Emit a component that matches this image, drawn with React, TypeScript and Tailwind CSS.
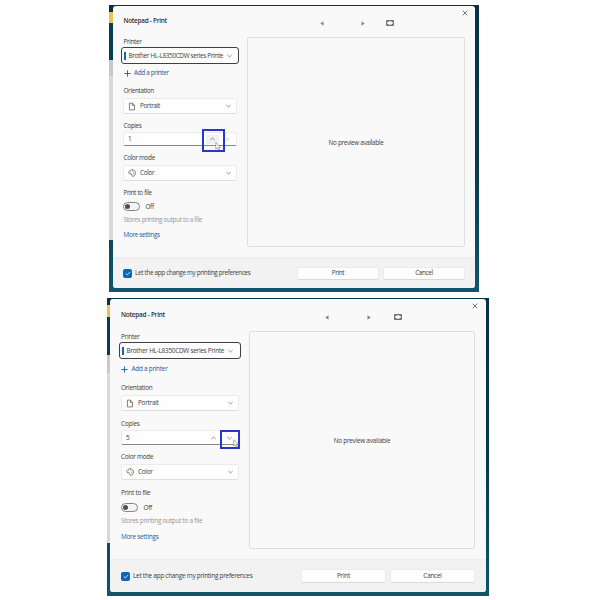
import React from 'react';

const first = {
  shell: 'ml-[109px] mt-[5px] h-[287px] w-[370px] pl-1 pr-1 pt-px',
  win: 'h-[282px]',
  body: 'h-[251px] pl-[10px] pr-[10px]',
  col: 'w-[114px]',
  title: 'h-[29px] text-[6.3px] tracking-[-0.22px] pt-px pl-[0.5px]',
  label: 'h-[12px] pt-[1.5px] pl-[0.5px]',
  printer: 'w-[118px] -ml-[2px] pl-[3px] pr-[6px]',
  add: 'h-[17px] pt-[1.5px] pl-[0.5px]',
  orient: 'h-[17px] pt-[3.5px] pl-[0.5px]',
  select: 'h-[16px]',
  copies: 'h-[18px] pt-[6.5px] pl-[0.5px]',
  input: 'h-[14px]',
  color: 'h-[19px] pt-[4.5px] pl-[0.5px]',
  file: 'h-[20px] pt-[3.5px] pl-[0.5px]',
  stores: 'h-[16px] pt-[1.5px] pl-[0.5px]',
  more: 'h-[14px] pt-[1.5px] pl-[0.5px]',
  text: 'text-[6.35px] tracking-[-0.32px]',
  right: 'ml-[10px] w-[218px]',
  bar: 'h-[31px]',
  close: 'right-[-3px] top-[3.5px]',
  prev: 'left-[73px] top-[15px]',
  next: 'left-[114px] top-[15px]',
  fit: 'left-[139px] top-[14px]',
  preview: 'h-[210px]',
  footer: 'pl-[10px] pr-[10px]',
  print: 'w-[82px] h-[13px]',
  up: 'mr-[3px]',
  mark: '-top-[4px] left-[78px] h-[23px] w-[23px]',
  cursor: 'left-[91px] top-[9px]',
  yellow: 'h-[11px]',
  navy: 'h-[37px]',
  gray: 'h-[15px]',
  light: 'h-[165px]',
};

const second: typeof first = {
  shell: 'ml-[107px] mt-[6px] h-[298px] w-[382px] pl-[3px] pr-[3px] pt-px',
  win: 'h-[293px]',
  body: 'h-[260px] pl-[11px] pr-[11px]',
  col: 'w-[118px]',
  title: 'h-[31px] text-[6.45px] tracking-[-0.25px] pt-px',
  label: 'h-[12px] pt-[1.5px]',
  printer: 'w-[122px] -ml-[2px] pl-[3px] pr-[7px]',
  add: 'h-[19px] pt-[1.5px]',
  orient: 'h-[17px] pt-[2.5px]',
  select: 'h-[16px]',
  copies: 'h-[19px] pt-[7px]',
  input: 'h-[15px]',
  color: 'h-[19px] pt-[5.5px]',
  file: 'h-[22px] pt-[4.5px]',
  stores: 'h-[17px] pt-[1.5px]',
  more: 'h-[14px] pt-[2px]',
  text: 'text-[6.4px] tracking-[-0.25px]',
  right: 'ml-[10px] w-[226px]',
  bar: 'h-[32px]',
  close: 'right-[-3px] top-[4px]',
  prev: 'left-[76px] top-[16px]',
  next: 'left-[118px] top-[16px]',
  fit: 'left-[144.5px] top-[15px]',
  preview: 'h-[218px]',
  footer: 'pl-[11px] pr-[11px]',
  print: 'w-[85px] h-[14px]',
  up: 'mr-[5px]',
  mark: '-top-px left-[98px] h-[19px] w-[20px]',
  cursor: 'left-[111px] top-[8px]',
  yellow: 'h-[12px]',
  navy: 'h-[38px]',
  gray: 'h-[17px]',
  light: 'h-[171px]',
};

function Chevron({ up = false, faint = false }: { up?: boolean; faint?: boolean }) {
  return (
    <svg width="5" height="4" viewBox="0 0 5 4" fill="none" stroke={faint ? '#b5b5b5' : '#777'} strokeWidth="0.8" className="shrink-0">
      <path d={up ? 'M0.4 3L2.5 1L4.6 3' : 'M0.4 1L2.5 3L4.6 1'} />
    </svg>
  );
}

function Select({ icon, value, size }: { icon: React.ReactNode; value: string; size: string }) {
  return (
    <div className={`flex w-full items-center rounded-[2px] border border-[#ebebeb] border-b-[#dedede] bg-[#fefefe] pl-[4px] pr-[5px] ${size}`}>
      {icon}
      <span className="ml-[4px] flex-1">{value}</span>
      <Chevron />
    </div>
  );
}

const PageIcon = () => (
  <svg width="8" height="9" viewBox="0 0 8 9" fill="none" stroke="#555" strokeWidth="0.75">
    <path d="M1.4 1.1H4.3L6.5 3.3V7.9H1.4ZM4.3 1.1V3.3H6.5" />
  </svg>
);

const PaletteIcon = () => (
  <svg width="8" height="8" viewBox="0 0 8 8" fill="none" stroke="#555" strokeWidth="0.75">
    <path d="M0.7 3.8C1 1.5 3 0.4 5 0.8C7.2 1.3 7.8 3.4 7.2 5.2C6.7 6.8 5.3 7.7 4.2 7.2C3.3 6.8 4.2 5.3 3.2 4.8C2.4 4.4 0.9 5.2 0.7 3.8Z" />
    <path d="M2.4 2.7H3M4.2 2.1H4.8M5.6 3.2H6.1M5.3 4.8H5.9" strokeWidth="0.8" />
  </svg>
);

function PrintDialog({ s, copies, down }: { s: typeof first; copies: string; down: boolean }) {
  return (
    <section className={`relative overflow-hidden bg-gradient-to-b from-[#043347] via-[#07384b] to-[#12546a] ${s.shell} ${s.text}`}>
      <div className="absolute left-0 top-[7px] flex w-1 flex-col">
        <div className={`bg-[#efc34f] ${s.yellow}`} />
        <div className={`bg-[#073d50] ${s.navy}`} />
        <div className={`bg-[#c8c8c8] ${s.gray}`} />
        <div className={`border-t border-[#c8c8c8] bg-[#d8d9da] ${s.light}`} />
      </div>
      <div className={`relative flex flex-col overflow-hidden rounded-[3px] bg-[#f9f9f9] text-[#3c3c3c] ${s.win}`}>
        <div className={`flex shrink-0 ${s.body}`}>
          <div className={`flex shrink-0 flex-col ${s.col}`}>
            <div className={`flex items-center font-semibold text-[#303030] ${s.title}`}>Notepad - Print</div>
            <div className={`flex items-center ${s.label}`}>Printer</div>
            <div className={`flex h-[17px] shrink-0 items-center rounded-[3px] border-[1.5px] border-[#3f3f3f] bg-[#fdfdfd] ${s.printer}`}>
              <span className="-ml-[1px] h-[8px] w-[2px] shrink-0 bg-[#1267b4]" />
              <span className="ml-[2.5px] flex-1 pt-[1.5px]">Brother HL-L8350CDW series Printe</span>
              <Chevron />
            </div>
            <div className={`flex items-center text-[#1f5898] ${s.add}`}>
              <svg width="7" height="7" viewBox="0 0 7 7" stroke="#1f5898" strokeWidth="0.9"><path d="M3.5 0.4V6.6M0.4 3.5H6.6" /></svg>
              <span className="ml-[3.5px]">Add a printer</span>
            </div>
            <div className={`flex items-center ${s.orient}`}>Orientation</div>
            <Select icon={<PageIcon />} value="Portrait" size={s.select} />
            <div className={`flex items-center ${s.copies}`}>Copies</div>
            <div className={`relative flex items-center rounded-[2px] border border-[#ebebeb] border-b-[#888] bg-[#fefefe] pl-[4px] pr-[6px] ${s.input}`}>
              <span className="flex-1 pt-px">{copies}</span>
              <span className={`flex items-center justify-center ${down ? 'w-[12px]' : 'h-[9px] w-[13px] rounded-[1px] bg-[#f1f1f1]'} ${s.up}`}><Chevron up /></span>
              <span className="ml-[3px]"><Chevron faint={!down} /></span>
              <div className={`absolute border-2 border-[#2836d0] ${s.mark}`} />
              <svg className={`absolute ${s.cursor}`} width="7" height="9" viewBox="0 0 7 9" fill="#fff" stroke="#777" strokeWidth="0.6">
                <path d="M0.8 0.7V7L2.3 5.7L3.4 8L4.5 7.5L3.5 5.3H5.5Z" />
              </svg>
            </div>
            <div className={`flex items-center ${s.color}`}>Color mode</div>
            <Select icon={<PaletteIcon />} value="Color" size={s.select} />
            <div className={`flex items-center ${s.file}`}>Print to file</div>
            <div className="flex h-[10px] items-center">
              <span className="flex h-[9px] w-[17px] items-center rounded-full border border-[#858585] bg-[#f4f4f4] pl-[1px]">
                <span className="h-[5px] w-[5px] rounded-full bg-[#4d4d4d]" />
              </span>
              <span className="ml-[5.5px] pt-[2px]">Off</span>
            </div>
            <div className={`flex items-center whitespace-nowrap text-[#969696] ${s.stores}`}>Stores printing output to a file</div>
            <div className={`flex items-center text-[#1f5898] ${s.more}`}>More settings</div>
          </div>
          <div className={`flex shrink-0 flex-col ${s.right}`}>
            <div className={`relative shrink-0 ${s.bar}`}>
              <svg className={`absolute ${s.prev}`} width="4" height="5" viewBox="0 0 4 5"><path d="M3.5 0.3V4.7L0.3 2.5Z" fill="#858585" /></svg>
              <svg className={`absolute ${s.next}`} width="4" height="5" viewBox="0 0 4 5"><path d="M0.5 0.3V4.7L3.7 2.5Z" fill="#858585" /></svg>
              <svg className={`absolute ${s.fit}`} width="8" height="6" viewBox="0 0 8 6">
                <rect x="0.6" y="0.6" width="6.8" height="4.8" rx="0.3" fill="none" stroke="#707070" strokeWidth="1.1" />
                <path d="M1 1H3L1 2.6ZM7 1V2.6L5 1ZM1 5V3.4L3 5ZM7 5H5L7 3.4Z" fill="#707070" />
              </svg>
              <svg className={`absolute ${s.close}`} width="6" height="6" viewBox="0 0 6 6" stroke="#555" strokeWidth="0.8"><path d="M0.7 0.7L5.3 5.3M5.3 0.7L0.7 5.3" /></svg>
            </div>
            <div className={`flex items-center justify-center rounded-[2px] border border-[#dfdfdf] pt-[2.5px] ${s.preview}`}>No preview available</div>
          </div>
        </div>
        <div className={`flex flex-1 items-center border-t border-[#eeeeee] bg-[#f2f2f2] ${s.footer}`}>
          <span className="flex h-[9px] w-[9px] items-center justify-center rounded-[2px] bg-[#0967b9]">
            <svg width="6" height="5" viewBox="0 0 6 5" fill="none" stroke="#fff" strokeWidth="0.8"><path d="M0.7 2.4L2.3 3.9L5.3 0.9" /></svg>
          </span>
          <span className="ml-[3px] flex-1">Let the app change my printing preferences</span>
          <button className={`rounded-[2px] border border-[#ebebeb] border-b-[#dadada] bg-[#fdfdfd] ${s.print}`}>Print</button>
          <button className={`ml-[4px] rounded-[2px] border border-[#ebebeb] border-b-[#dadada] bg-[#fdfdfd] ${s.print}`}>Cancel</button>
        </div>
      </div>
    </section>
  );
}

export default function App() {
  return (
    <main className="flex h-[600px] w-[600px] flex-col overflow-hidden whitespace-nowrap bg-white font-['Open_Sans','Noto_Sans',sans-serif] leading-none">
      <PrintDialog s={first} copies="1" down={false} />
      <PrintDialog s={second} copies="5" down />
    </main>
  );
}
